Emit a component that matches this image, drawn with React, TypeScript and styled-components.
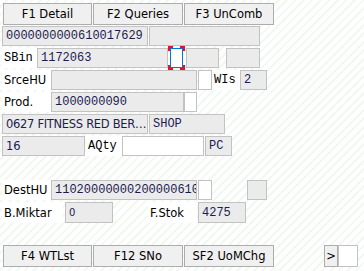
import React from "react";
import styled, { createGlobalStyle } from "styled-components";

const GlobalStyle = createGlobalStyle`
  html, body {
    margin: 0;
    padding: 0;
  }
  body {
    width: 364px;
    height: 271px;
    overflow: hidden;
    background: repeating-linear-gradient(
      135deg,
      #ffffff 0px,
      #ffffff 4px,
      #f1f8f1 4px,
      #f1f8f1 6px
    );
  }
`;

const sans = `"DejaVu Sans", "Liberation Sans", sans-serif`;
const mono = `"Liberation Mono", "Courier New", monospace`;

const Screen = styled.div`
  display: flex;
  flex-direction: column;
  padding: 3px 0 0 2px;
  width: 364px;
  height: 271px;
  box-sizing: border-box;
`;

const Row = styled.div<{ $mt?: number; $h?: number }>`
  display: flex;
  align-items: stretch;
  height: ${(p) => p.$h ?? 20}px;
  margin-top: ${(p) => p.$mt ?? 2}px;
`;

interface IBoxProps {
  $w: number;
  $ml?: number;
  $mono?: boolean;
}

const Button = styled.div<IBoxProps>`
  box-sizing: border-box;
  width: ${(p) => p.$w}px;
  margin-left: ${(p) => p.$ml ?? 0}px;
  background: #f0f0f0;
  border: 1px solid #adadad;
  display: flex;
  align-items: center;
  justify-content: center;
  font-family: ${sans};
  font-size: 11.5px;
  color: #000;
  white-space: nowrap;
`;

const Field = styled.div<IBoxProps & { $white?: boolean; $small?: boolean; $tight?: boolean }>`
  box-sizing: border-box;
  width: ${(p) => p.$w}px;
  margin-left: ${(p) => p.$ml ?? 0}px;
  background: ${(p) => (p.$white ? "#ffffff" : "#ebebeb")};
  border: 1px solid #c2c2c2;
  padding: 0 1px 0 3px;
  display: flex;
  align-items: center;
  overflow: hidden;
  white-space: nowrap;
  font-family: ${(p) => (p.$mono ? mono : sans)};
  font-size: ${(p) => (p.$small ? 10 : p.$mono ? 12 : 11.5)}px;
  letter-spacing: ${(p) => (p.$tight ? "-0.3px" : "normal")};
  color: #1c1c50;
`;

const Label = styled.div<IBoxProps>`
  box-sizing: border-box;
  width: ${(p) => p.$w}px;
  margin-left: ${(p) => p.$ml ?? 0}px;
  background: #ffffff;
  padding: 0 2px;
  display: flex;
  align-items: center;
  white-space: nowrap;
  font-family: ${(p) => (p.$mono ? mono : sans)};
  font-size: ${(p) => (p.$mono ? 12 : 11.5)}px;
  color: #000;
`;

const FocusWrap = styled.div`
  position: relative;
  width: 17px;
  display: flex;
  justify-content: center;
`;

const FocusBox = styled.div`
  box-sizing: border-box;
  width: 13px;
  background: #ffffff;
  border: 1px solid #0078d7;
`;

const Corners = styled.svg`
  position: absolute;
  left: 0;
  top: -2px;
  width: 17px;
  height: 24px;
`;

const FocusField = () => (
  <FocusWrap>
    <FocusBox />
    <Corners viewBox="0 0 17 24">
      <path
        d="M1 5 V1 H5 M12 1 H16 V5 M16 19 V23 H12 M5 23 H1 V19"
        fill="none"
        stroke="#e81123"
        strokeWidth="2"
      />
    </Corners>
  </FocusWrap>
);

const App = () => (
  <>
    <GlobalStyle />
    <Screen>
      <Row $mt={0} $h={22}>
        <Button $w={89} $ml={1}>F1 Detail</Button>
        <Button $w={90} $ml={1}>F2 Queries</Button>
        <Button $w={90} $ml={1}>F3 UnComb</Button>
      </Row>
      <Row $mt={1}>
        <Field $w={146} $mono>0000000000610017629</Field>
        <Field $w={111} $ml={1} />
      </Row>
      <Row>
        <Label $w={35} $mono>SBin</Label>
        <Field $w={131} $mono>1172063</Field>
        <FocusField />
        <Field $w={33} $ml={1} />
        <Field $w={34} $ml={7} />
      </Row>
      <Row>
        <Label $w={49}>SrceHU</Label>
        <Field $w={146} />
        <Field $w={14} $ml={1} $white />
        <Label $w={28} $mono>WIs</Label>
        <Field $w={27} $mono>2</Field>
      </Row>
      <Row>
        <Label $w={49}>Prod.</Label>
        <Field $w={133} $mono>1000000090</Field>
        <Field $w={13} $white />
      </Row>
      <Row>
        <Field $w={146} $tight>0627 FITNESS RED BER…</Field>
        <Field $w={76} $ml={1} $mono>SHOP</Field>
      </Row>
      <Row>
        <Field $w={83}>16</Field>
        <Label $w={36} $ml={1} $mono>AQty</Label>
        <Field $w={82} $white />
        <Field $w={27} $ml={1} $mono>PC</Field>
      </Row>
      <Row $mt={24}>
        <Label $w={49}>DestHU</Label>
        <Field $w={146} $mono>11020000000200000610</Field>
        <Field $w={14} $ml={1} $white />
        <Field $w={20} $ml={35} />
      </Row>
      <Row $h={21}>
        <Label $w={61}>B.Miktar</Label>
        <Field $w={48} $ml={2} $small>0</Field>
        <Label $w={49} $ml={35}>F.Stok</Label>
        <Field $w={48} $ml={1} $mono>4275</Field>
      </Row>
      <Row $mt={22} $h={22}>
        <Button $w={89} $ml={1}>F4 WTLst</Button>
        <Button $w={90} $ml={1}>F12 SNo</Button>
        <Button $w={90} $ml={1}>SF2 UoMChg</Button>
        <Button $w={14} $ml={50}>&gt;</Button>
        <Field $w={20} $white />
      </Row>
    </Screen>
  </>
);

export default App;
